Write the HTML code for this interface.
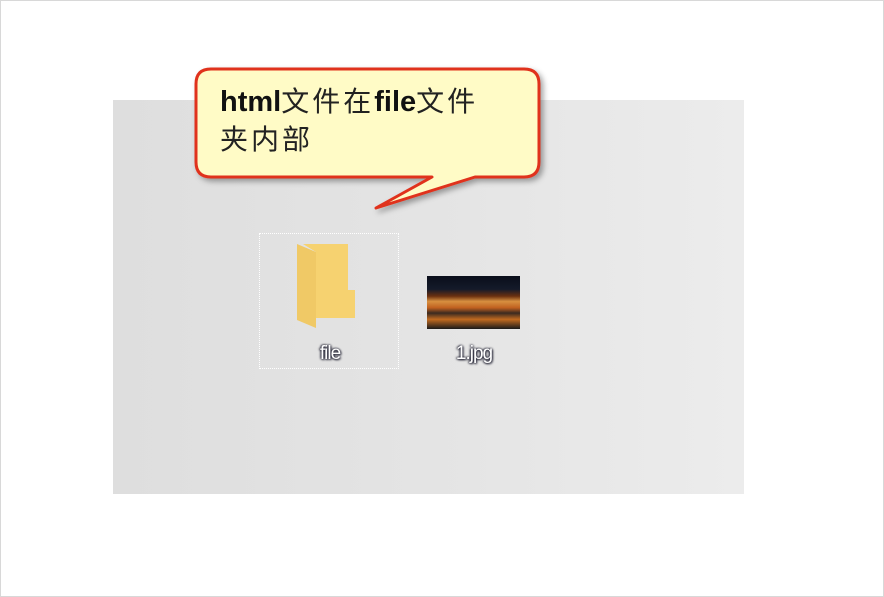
<!DOCTYPE html>
<html><head><meta charset="utf-8"><style>
html,body{margin:0;padding:0}
body{width:884px;height:597px;background:#fff;position:relative;overflow:hidden;font-family:"Liberation Sans","Noto Sans CJK SC",sans-serif}
.frame{position:absolute;left:0;top:0;width:882px;height:595px;border:1px solid #d8d8d8}
.gray{position:absolute;left:113px;top:100px;width:631px;height:394px;background:linear-gradient(90deg,#dedede,#e4e4e4 50%,#ececec)}
.sel{position:absolute;left:259px;top:233px;width:140px;height:136px;border:1px dotted #fff;box-sizing:border-box}
.lbl{position:absolute;font-size:19px;color:#fff;text-shadow:0 0 2px #223,1px 1px 2px #223,-1px 0 2px #223;text-align:center;letter-spacing:-1px}
.txt{position:absolute;left:220px;top:83px;font-size:29px;font-weight:bold;line-height:38px;color:#111;white-space:nowrap}
.txt span{font-weight:normal;font-size:28px;letter-spacing:3px;color:#222}
.img{position:absolute;left:427px;top:276px;width:93px;height:53px;background:linear-gradient(180deg,#0a0e1a 0%,#141a2a 25%,#6a3010 38%,#d89040 48%,#c06020 60%,#3a2a20 70%,#c06a20 82%,#1a1a1a 100%)}
</style></head><body>
<div class="frame"></div>
<div class="gray"></div>
<div class="sel"></div>
<svg width="884" height="597" style="position:absolute;left:0;top:0">
<defs><filter id="s"><feDropShadow dx="3" dy="3" stdDeviation="3" flood-opacity="0.35"/></filter></defs>
<path d="M211 69 H524 Q539 69 539 84 V162 Q539 177 524 177 H475 L376 208 L432 177 H211 Q196 177 196 162 V84 Q196 69 211 69 Z" fill="#fffbc6" stroke="#e0301c" stroke-width="3" stroke-linejoin="round" filter="url(#s)"/>
<path d="M303 244 H348 V290 H355 V318 H316 V252 Z" fill="#f6d270"/>
<path d="M297 244 L316 252 V328 L297 320 Z" fill="#f0c966"/>
</svg>
<div class="img"></div>
<div class="lbl" style="left:300px;top:343px;width:60px">file</div>
<div class="lbl" style="left:434px;top:343px;width:80px">1.jpg</div>
<div class="txt">html<span>文件在</span>file<span>文件</span><br><span>夹内部</span></div>
</body></html>
